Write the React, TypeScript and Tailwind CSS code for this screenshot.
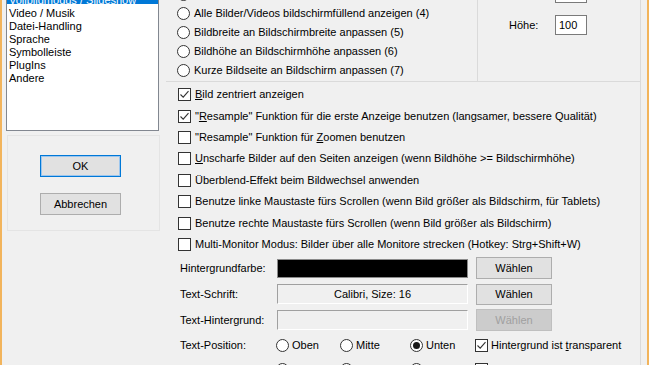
import React from 'react';

const Radio: React.FC<{ checked?: boolean }> = ({ checked }) => (
  <span className="flex h-[13px] w-[13px] shrink-0 items-center justify-center rounded-full border border-[#333333] bg-white">
    {checked && <span className="h-[7px] w-[7px] rounded-full bg-[#1a1a1a]" />}
  </span>
);

const Check: React.FC<{ checked?: boolean }> = ({ checked }) => (
  <span className="flex h-[13px] w-[13px] shrink-0 items-center justify-center border border-[#333333] bg-white">
    {checked && (
      <svg width="11" height="11" viewBox="0 0 11 11">
        <path d="M1.5 5.5 L4.2 8.2 L9.5 2.2" fill="none" stroke="#333333" strokeWidth="1.1" />
      </svg>
    )}
  </span>
);

const radios = [
  'Originalgröße anzeigen (oder verkleinern) (3)',
  'Alle Bilder/Videos bildschirmfüllend anzeigen (4)',
  'Bildbreite an Bildschirmbreite anpassen (5)',
  'Bildhöhe an Bildschirmhöhe anpassen (6)',
  'Kurze Bildseite an Bildschirm anpassen (7)',
];

const listItems = ['Video / Musik', 'Datei-Handling', 'Sprache', 'Symbolleiste', 'PlugIns', 'Andere'];

const App: React.FC = () => {
  const checks: { checked?: boolean; label: React.ReactNode }[] = [
    { checked: true, label: <><u>B</u>ild zentriert anzeigen</> },
    { checked: true, label: <>"<u>R</u>esample" Funktion für die erste Anzeige benutzen (langsamer, bessere Qualität)</> },
    { label: <>"Resample" Funktion für <u>Z</u>oomen benutzen</> },
    { label: <><u>U</u>nscharfe Bilder auf den Seiten anzeigen (wenn Bildhöhe &gt;= Bildschirmhöhe)</> },
    { label: <>Überblend-Effekt beim Bildwechsel anwenden</> },
    { label: <>Benutze linke Maustaste fürs Scrollen (wenn Bild größer als Bildschirm, für Tablets)</> },
    { label: <>Benutze rechte Maustaste fürs Scrollen (wenn Bild größer als Bildschirm)</> },
    { label: <>Multi-Monitor Modus: Bilder über alle Monitore strecken (Hotkey: Strg+Shift+W)</> },
  ];

  return (
    <div className="flex h-[365px] w-[649px] overflow-hidden bg-[#f0f0f0] font-['Liberation_Sans',Tahoma,sans-serif] text-[11px] leading-[13px] text-black">
      <div className="w-[2px] shrink-0 bg-[#f2b45c]" />

      {/* Left column: page list and buttons */}
      <div className="w-[164px] shrink-0">
        <div className="-mt-[10px] ml-[4px] h-[141px] w-[153px] border border-[#828790] bg-white">
          <div className="h-[13px] bg-[#0078d7] pl-[2px] pt-[3px] text-white whitespace-nowrap">Vollbildmodus / Slideshow</div>
          {listItems.map((item) => (
            <div key={item} className="h-[13px] pl-[2px] pt-[3px] whitespace-nowrap">{item}</div>
          ))}
        </div>
        <div className="ml-[5px] mt-[4px] flex h-[96px] w-[153px] flex-col border border-[#e4e4e4] pl-[32px] pt-[19px]">
          <button className="h-[22px] w-[81px] border border-[#0078d7] bg-[#e1e1e1] shadow-[inset_0_0_0_1px_#9cc6ee]">OK</button>
          <button className="mt-[16px] h-[22px] w-[81px] border border-[#adadad] bg-[#e1e1e1]">Abbrechen</button>
        </div>
      </div>

      {/* Right column: options */}
      <div className="w-[475px] shrink-0 border-r border-[#dadada]">
        <div className="-mt-[20px] flex h-[102px] border-b border-[#dadada]">
          <div className="w-[312px] border-r border-[#dadada] pl-[11px] pt-[5px]">
            {radios.map((r) => (
              <div key={r} className="flex h-[19px] items-center whitespace-nowrap">
                <Radio />
                <span className="ml-[4px]">{r}</span>
              </div>
            ))}
          </div>
          <div className="flex-1 pt-[3px]">
            <div className="flex h-[20px] items-center">
              <span className="ml-[31px] w-[46px]">Breite:</span>
              <span className="flex h-[20px] w-[32px] items-center border border-[#7a7a7a] bg-white pl-[3px]">100</span>
            </div>
            <div className="mt-[12px] flex h-[20px] items-center">
              <span className="ml-[31px] w-[46px]">Höhe:</span>
              <span className="flex h-[20px] w-[32px] items-center border border-[#7a7a7a] bg-white pl-[3px]">100</span>
            </div>
          </div>
        </div>

        <div className="pl-[12px] pt-[2px]">
          {checks.map((c, i) => (
            <div key={i} className="flex h-[21.4px] items-center whitespace-nowrap">
              <Check checked={c.checked} />
              <span className="ml-[4px]">{c.label}</span>
            </div>
          ))}
        </div>

        <div className="pl-[14px]">
          <div className="flex h-[26px] items-center">
            <span className="w-[97px]">Hintergrundfarbe:</span>
            <span className="h-[19px] w-[191px] border border-[#8a8a8a] bg-black" />
            <button className="ml-[8px] h-[22px] w-[76px] border border-[#adadad] bg-[#e1e1e1]">Wählen</button>
          </div>
          <div className="flex h-[26px] items-center">
            <span className="w-[97px]">Text-Schrift:</span>
            <span className="flex h-[20px] w-[191px] items-center justify-center border border-t-[#a0a0a0] border-l-[#a0a0a0] border-r-white border-b-white bg-[#f0f0f0]">Calibri, Size: 16</span>
            <button className="ml-[8px] h-[21px] w-[76px] border border-[#adadad] bg-[#e1e1e1]">Wählen</button>
          </div>
          <div className="flex h-[26px] items-center">
            <span className="w-[97px]">Text-Hintergrund:</span>
            <span className="h-[20px] w-[191px] border border-t-[#a0a0a0] border-l-[#a0a0a0] border-r-white border-b-white bg-[#f0f0f0]" />
            <button className="ml-[8px] h-[22px] w-[76px] border border-[#bfbfbf] bg-[#cccccc] text-[#a0a0a0]">Wählen</button>
          </div>
          <div className="flex h-[25px] items-center whitespace-nowrap">
            <span className="w-[96px]">Text-Position:</span>
            <span className="flex w-[64px] items-center"><Radio /><span className="ml-[3px]">Oben</span></span>
            <span className="flex w-[70px] items-center"><Radio /><span className="ml-[3px]">Mitte</span></span>
            <span className="flex w-[65px] items-center"><Radio checked /><span className="ml-[3px]">Unten</span></span>
            <span className="flex items-center"><Check checked /><span className="ml-[3px]">Hintergrund ist <u>t</u>ransparent</span></span>
          </div>
          <div className="flex h-[22px] items-center whitespace-nowrap">
            <span className="w-[96px]">Text-Ausrichtung:</span>
            <span className="flex w-[64px] items-center"><Radio /><span className="ml-[3px]">Links</span></span>
            <span className="flex w-[70px] items-center"><Radio checked /><span className="ml-[3px]">Zentriert</span></span>
            <span className="flex w-[65px] items-center"><Radio /><span className="ml-[3px]">Rechts</span></span>
            <span className="flex items-center"><Check /><span className="ml-[3px]">Hinweis zum Verhalten</span></span>
          </div>
        </div>
      </div>

      <div className="w-[6px] shrink-0" />
      <div className="w-[2px] shrink-0 bg-[#f2b45c]" />
    </div>
  );
};

export default App;
